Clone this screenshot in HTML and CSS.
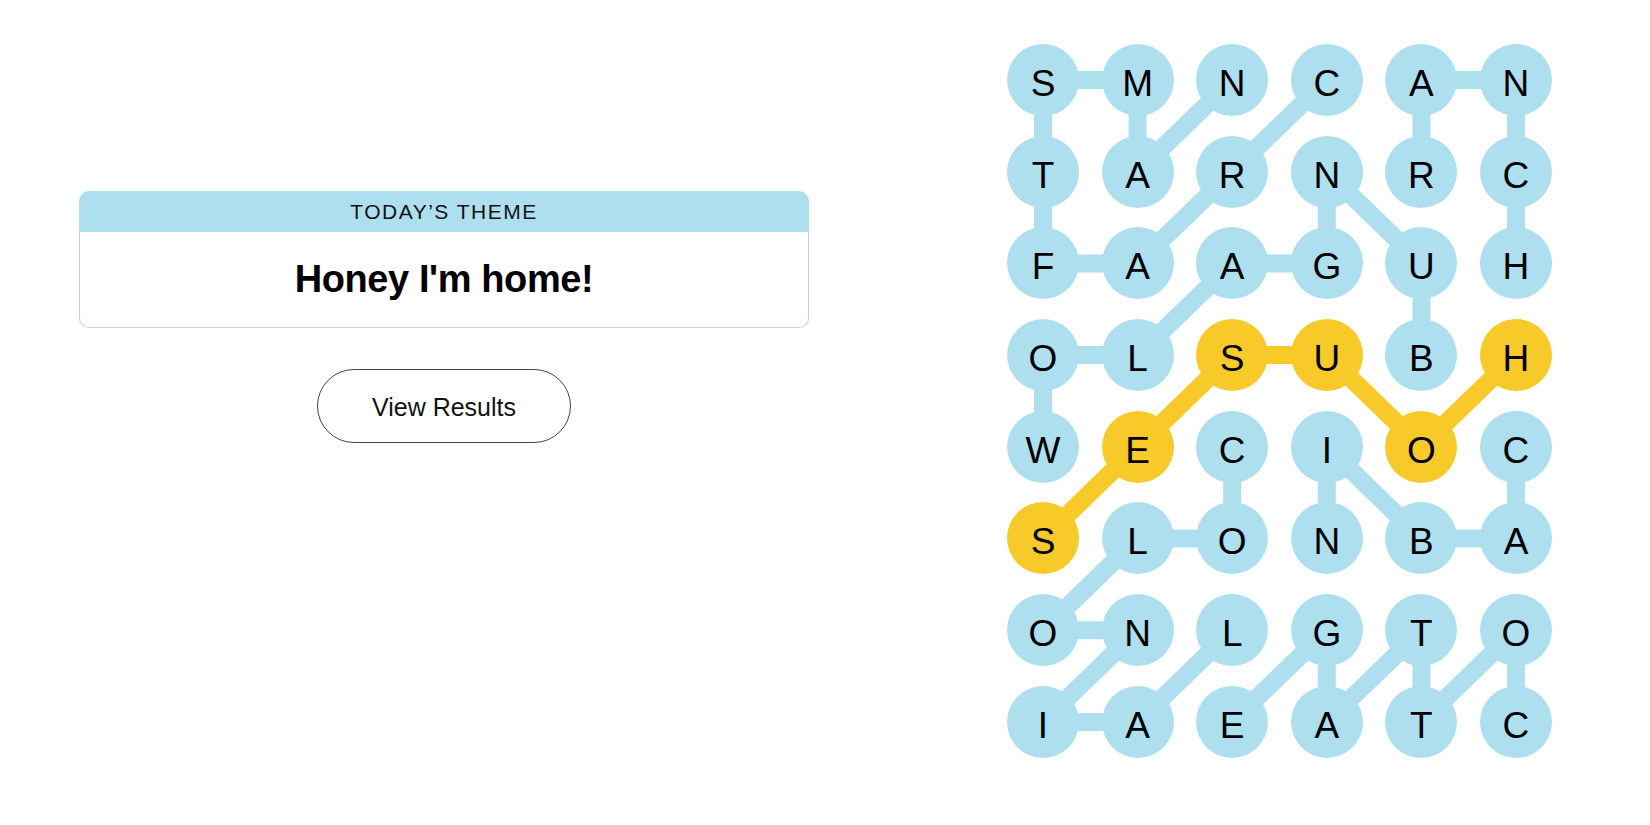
FILE: index.html
```html
<!DOCTYPE html>
<html lang="en">
<head>
<meta charset="utf-8">
<title>Strands</title>
<link rel="stylesheet" href="styles.css">
</head>
<body>
<main class="page">
  <section class="left">
    <div class="theme-card">
      <div class="theme-header">TODAY’S THEME</div>
      <div class="theme-body"><h1 class="theme-title">Honey I'm home!</h1></div>
    </div>
    <button class="results-btn">View Results</button>
  </section>

  <section class="board">
    <svg class="paths" width="545" height="714" viewBox="0 0 545 714">
      <g class="found" fill="none" stroke-linejoin="round">
        <polyline points="319.8,36 225.2,127.7 130.6,219.4 36,219.4 36,127.7 36,36 130.6,36 130.6,127.7 225.2,36"/>
        <polyline points="414.4,127.7 414.4,36 509,36 509,127.7 509,219.4"/>
        <polyline points="414.4,311.1 414.4,219.4 319.8,127.7 319.8,219.4 225.2,219.4 130.6,311.1 36,311.1 36,402.8"/>
        <polyline points="225.2,402.8 225.2,494.5 130.6,494.5 36,586.2 130.6,586.2 36,677.9 130.6,677.9 225.2,586.2"/>
        <polyline points="509,402.8 509,494.5 414.4,494.5 319.8,402.8 319.8,494.5"/>
        <polyline points="509,677.9 509,586.2 414.4,677.9 414.4,586.2 319.8,677.9 319.8,586.2 225.2,677.9"/>
      </g>
      <g class="spangram" fill="none" stroke-linejoin="round">
        <polyline points="509,311.1 414.4,402.8 319.8,311.1 225.2,311.1 130.6,402.8 36,494.5"/>
      </g>
    </svg>
    <div class="grid">
      <div class="cell">S</div><div class="cell">M</div><div class="cell">N</div><div class="cell">C</div><div class="cell">A</div><div class="cell">N</div>
      <div class="cell">T</div><div class="cell">A</div><div class="cell">R</div><div class="cell">N</div><div class="cell">R</div><div class="cell">C</div>
      <div class="cell">F</div><div class="cell">A</div><div class="cell">A</div><div class="cell">G</div><div class="cell">U</div><div class="cell">H</div>
      <div class="cell">O</div><div class="cell">L</div><div class="cell span">S</div><div class="cell span">U</div><div class="cell">B</div><div class="cell span">H</div>
      <div class="cell">W</div><div class="cell span">E</div><div class="cell">C</div><div class="cell">I</div><div class="cell span">O</div><div class="cell">C</div>
      <div class="cell span">S</div><div class="cell">L</div><div class="cell">O</div><div class="cell">N</div><div class="cell">B</div><div class="cell">A</div>
      <div class="cell">O</div><div class="cell">N</div><div class="cell">L</div><div class="cell">G</div><div class="cell">T</div><div class="cell">O</div>
      <div class="cell">I</div><div class="cell">A</div><div class="cell">E</div><div class="cell">A</div><div class="cell">T</div><div class="cell">C</div>
    </div>
  </section>
</main>
</body>
</html>
```

FILE: styles.css
```css
* { box-sizing: border-box; }

html, body {
  margin: 0;
  padding: 0;
  background: #ffffff;
}

body {
  font-family: "Liberation Sans", Arial, sans-serif;
  color: #121212;
}

.page {
  display: flex;
  align-items: flex-start;
  padding: 44px 0 0 79px;
  gap: 198px;
}

.left {
  width: 730px;
  margin-top: 147px;
  display: flex;
  flex-direction: column;
  align-items: center;
}

.theme-card {
  width: 100%;
}

.theme-header {
  height: 41px;
  background: #aedfee;
  border-radius: 10px 10px 0 0;
  display: flex;
  align-items: center;
  justify-content: center;
  padding-top: 1px;
  font-size: 21px;
  letter-spacing: 1.5px;
  color: #121212;
}

.theme-body {
  height: 96px;
  border: 1px solid #cfcfcf;
  border-top: 0;
  border-radius: 0 0 10px 10px;
  display: flex;
  align-items: center;
  justify-content: center;
  padding-bottom: 1px;
}

.theme-title {
  margin: 0;
  font-size: 38px;
  font-weight: 700;
  letter-spacing: -0.4px;
  color: #000;
}

.results-btn {
  margin-top: 41px;
  width: 254px;
  height: 74px;
  border: 1px solid #444;
  border-radius: 37px;
  background: #fff;
  font-family: "Liberation Sans", Arial, sans-serif;
  font-size: 25px;
  color: #121212;
  padding: 0;
  padding-top: 2px;
}

.board {
  position: relative;
  width: 545px;
  height: 714px;
}

.paths {
  position: absolute;
  left: 0;
  top: 0;
  z-index: 0;
}

.found polyline {
  stroke: #aedfee;
  stroke-width: 18;
}

.spangram polyline {
  stroke: #f7ca2a;
  stroke-width: 18;
}

.grid {
  position: relative;
  z-index: 1;
  display: grid;
  grid-template-columns: repeat(6, 72px);
  grid-auto-rows: 72px;
  column-gap: 22.6px;
  row-gap: 19.7px;
}

.cell {
  width: 72px;
  height: 72px;
  border-radius: 50%;
  background: #aedfee;
  display: flex;
  align-items: center;
  justify-content: center;
  padding-top: 8px;
  font-size: 37px;
  color: #000;
}

.cell.span {
  background: #f7ca2a;
}
```
